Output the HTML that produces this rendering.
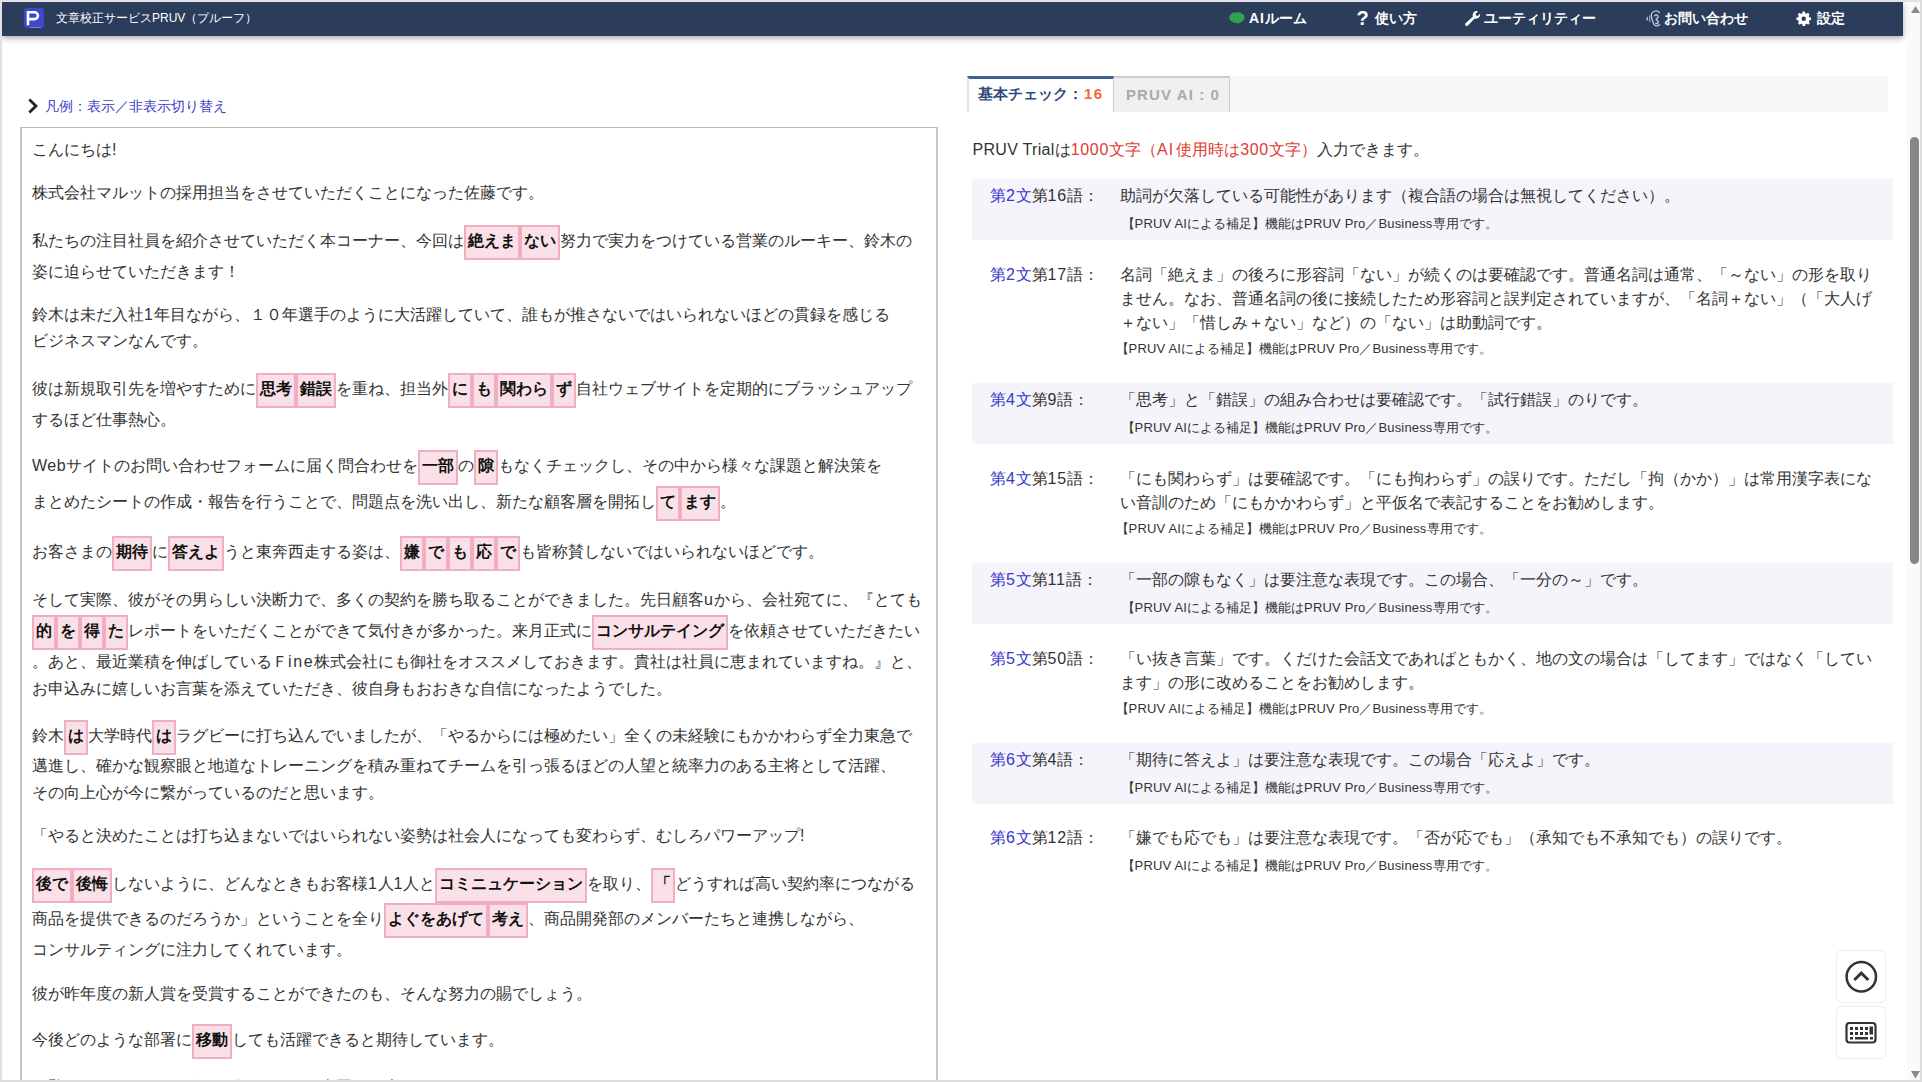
<!DOCTYPE html>
<html lang="ja">
<head>
<meta charset="utf-8">
<title>文章校正サービスPRUV（プルーフ）</title>
<style>
html,body{margin:0;padding:0;width:1922px;height:1082px;overflow:hidden;}
body{width:1922px;height:1082px;position:relative;overflow:hidden;background:#fff;font-family:"Liberation Sans",sans-serif;color:#333;}
*{box-sizing:border-box;}
#frame{position:absolute;left:0;top:0;width:1922px;height:1082px;border:2px solid #dcdcdc;border-top-color:#e2e2e6;border-left-color:#e1e1e5;z-index:50;pointer-events:none;}
#nav{position:absolute;left:2px;top:2px;width:1901px;height:34px;background:#2c3d5c;box-shadow:0 2px 6px rgba(20,30,50,.4);z-index:10;}
#logo{position:absolute;left:22px;top:6px;width:20px;height:20px;border-radius:3px;background:#3f48cc;}
#title{position:absolute;left:54px;top:0;height:32px;line-height:32px;font-size:12px;color:#fff;white-space:nowrap;}
.ni{position:absolute;top:0;height:32px;line-height:32px;font-size:14px;font-weight:bold;color:#fff;white-space:nowrap;}
.ic{position:absolute;}
#legend{position:absolute;left:45px;top:95.500px;height:20px;line-height:20px;font-size:14px;color:#3d3dcc;white-space:nowrap;}
#box{position:absolute;left:20px;top:127px;width:918px;height:955px;border:1px solid #b9b9b9;border-bottom:0;border-left:2px solid #c6c6c6;border-right:2px solid #c6c6c6;background:#fff;overflow:hidden;}
.l{position:absolute;left:10px;height:35px;line-height:35px;font-size:16px;white-space:nowrap;color:#333;}
.h{display:inline-block;vertical-align:top;position:relative;top:2px;height:35px;line-height:27px;padding:0 2px;border:2px solid #f1adc2;background:#fae1e7;font-weight:bold;color:#111;}
.r{display:inline-block;}.a-1{letter-spacing:.7px;}.a-u{letter-spacing:1.4px;}.a-ine{letter-spacing:1.6px;}.a-Web{letter-spacing:.5px;}.n{letter-spacing:.7px;}.sa{letter-spacing:.17px;}
#tabs{position:absolute;left:967px;top:76px;width:921px;height:36px;background:#f7f7f7;}
#t1{position:absolute;left:0;top:0;width:147px;height:36px;background:#fff;border-top:3px solid #42608f;border-left:2px solid #e4e4e4;border-right:1px solid #ccc;font-size:15px;font-weight:bold;color:#2f4a7a;line-height:30px;padding-left:9px;white-space:nowrap;}
#t1 b{color:#f0683c;letter-spacing:1.3px;margin-left:1px;}
#t2{position:absolute;left:147px;top:0;width:116px;height:36px;background:#f0f0f0;border-top:2px solid #ccc;border-right:1px solid #ccc;font-size:15px;font-weight:bold;color:#aaa;line-height:34px;padding-left:12px;letter-spacing:1.1px;white-space:nowrap;}
#trial{position:absolute;left:972.5px;top:138px;height:24px;line-height:24px;font-size:16px;color:#333;white-space:nowrap;}
#trial span{color:#e03a2e;}i{font-style:normal;}.t1{letter-spacing:.3px;}.t2{letter-spacing:1px;margin-right:2px;}
.it{position:absolute;left:972px;width:921px;}
.it.bg{background:#f4f4fa;}
.ref{position:absolute;left:18px;height:24px;line-height:24px;font-size:16px;color:#333;white-space:nowrap;}
.lk{color:#3838cc;}
.d{position:absolute;left:148px;height:24px;line-height:24px;font-size:16px;color:#333;white-space:nowrap;}
.s{position:absolute;left:149.600px;height:20px;line-height:20px;font-size:13px;color:#333;white-space:nowrap;}
.s.m{left:143.600px;}
.fb{position:absolute;left:1836px;width:50px;height:53px;border:1px solid #e8edf7;border-radius:5px;background:#fff;}
#sb{position:absolute;left:1907px;top:2px;width:13px;height:1078px;background:#fafafa;}
#thumb{position:absolute;left:3px;top:135px;width:9px;height:427px;border-radius:4.500px;background:#868686;}
</style>
</head>
<body>
<div id="nav">
  <div id="logo"><svg width="20" height="20" viewBox="0 0 20 20"><path d="M4 17.3V4.300h6.500a3.400 3.400 0 0 1 0 6.800H4" fill="none" stroke="#fff" stroke-width="2.600"/><path d="M6 19.500h11" stroke="#7a84e0" stroke-width="1" fill="none"/></svg></div>
  <div id="title">文章校正サービスPRUV（プルーフ）</div>
  <svg class="ic" style="left:1227px;top:10px" width="16" height="12" viewBox="0 0 16 12"><path d="M5.5 0.5C3.5 0.3 2 1.4 1.6 2.8 0.4 3.6 0 5 0.5 6.3 0.3 8 1.6 9.3 3.2 9.4 4 10.6 5.6 11 7 10.6 7.6 11.6 9.4 11.8 10.4 10.8 12.2 11 13.6 10 13.9 8.6 15.4 7.8 16 6 15.3 4.6 15.3 3 14 1.6 12.4 1.6 11.4 0.3 9.4 0 8 0.8 7.3 0.3 6.3 0.3 5.5 0.5Z" fill="#2fa34d"/></svg>
  <div class="ni" style="left:1247px"><i style="letter-spacing:.8px">AI</i>ルーム</div>
  <div class="ni" style="left:1354.5px;font-size:20px;top:-0.5px">?</div>
  <div class="ni" style="left:1373px">使い方</div>
  <svg class="ic" style="left:1463px;top:9.2px" width="16" height="15" viewBox="0 0 16 15"><path d="M15.2 2.6 12.8 5 11 4.6 10.6 2.8 13 0.4C11.6-.2 9.9.1 8.8 1.2 7.6 2.4 7.4 4.1 8 5.5L.6 12.3c-.7.7-.7 1.7 0 2.3s1.700.7 2.300 0L9.700 7.400c1.400.6 3.100.3 4.300-.8 1.100-1.100 1.400-2.700.9-4.100Z" fill="#fff"/></svg>
  <div class="ni" style="left:1482px">ユーティリティー</div>
  <svg class="ic" style="left:1642px;top:8px" width="18" height="17" viewBox="0 0 18 17"><g fill="none" stroke="#c6cde0" stroke-width="1.3" stroke-linecap="round" stroke-linejoin="round"><path d="M15.3 2.700C14.600 1.500 13.500 0.900 12.400 0.900 9.500 0.900 7.300 3 7.300 5.600c0 2.500 1 4 1.600 6 0.600 2.200 1.700 4.200 3.600 4.200 1.300 0 2.300-0.400 3.100-1.100"/><path d="M10.900 5.800C11.300 4.600 13.800 4.600 14.200 6.600c0.300 1.600-2 1.700-2.100 2.800 0 1.100 2.300 0.900 2.200 2.500-0.100 1.400-1.500 1.900-2.500 1.500"/></g><path d="M5.200 5.600h1v6.400h-1zM1.800 8.800L4 6.300v5z" fill="#aab3cf"/></svg>
  <div class="ni" style="left:1662px">お問い合わせ</div>
  <svg class="ic" style="left:1794px;top:8.5px" width="15.5" height="15.5" viewBox="0 0 16 16"><path fill="#fff" d="M15.500 9.200V6.800l-1.900-.4c-.1-.5-.3-.9-.6-1.300l1.100-1.600-1.700-1.700-1.600 1.100c-.4-.2-.9-.4-1.300-.6L9.200.5H6.800l-.4 1.900c-.5.100-.9.300-1.300.6L3.500 1.900 1.800 3.600l1.100 1.600c-.2.400-.4.900-.6 1.300L.5 6.800v2.400l1.900.4c.1.500.3.900.6 1.300l-1.100 1.600 1.700 1.700 1.600-1.100c.4.200.9.4 1.300.6l.4 1.900h2.400l.4-1.900c.5-.1.900-.3 1.300-.6l1.600 1.100 1.700-1.700-1.100-1.600c.2-.4.4-.9.6-1.300l1.700-.4ZM8 10.3A2.3 2.3 0 1 1 8 5.7a2.3 2.3 0 0 1 0 4.6Z"/></svg>
  <div class="ni" style="left:1815px">設定</div>
</div>

<svg class="ic" style="left:27px;top:98px" width="12" height="16" viewBox="0 0 12 16"><path d="M2.300 1.400l6.700 6.600-6.700 6.600" fill="none" stroke="#222" stroke-width="2.800"/></svg>
<div id="legend">凡例：表示／非表示切り替え</div>

<div id="box">
<div class="l" style="top:3.7px"><span class="r" style="width:84.45px">こんにちは!</span></div>
<div class="l" style="top:46.6px"><span class="r" style="width:512px">株式会社マルットの採用担当をさせていただくことになった佐藤です。</span></div>
<div class="l" style="top:95.0px"><span class="r" style="width:432px">私たちの注目社員を紹介させていただく本コーナー、今回は</span><span class="h" style="width:56px">絶えま</span><span class="h" style="width:40px">ない</span><span class="r" style="width:352px">努力で実力をつけている営業のルーキー、鈴木の</span></div>
<div class="l" style="top:126.2px"><span class="r" style="width:208px">姿に迫らせていただきます！</span></div>
<div class="l" style="top:168.6px"><span class="r" style="width:857.61px">鈴木は未だ入社<i class="a-1">1</i>年目ながら、１０年選手のように大活躍していて、誰もが推さないではいられないほどの貫録を感じる</span></div>
<div class="l" style="top:195.3px"><span class="r" style="width:176px">ビジネスマンなんです。</span></div>
<div class="l" style="top:242.7px"><span class="r" style="width:224px">彼は新規取引先を増やすために</span><span class="h" style="width:40px">思考</span><span class="h" style="width:40px">錯誤</span><span class="r" style="width:112px">を重ね、担当外</span><span class="h" style="width:24px">に</span><span class="h" style="width:24px">も</span><span class="h" style="width:56px">関わら</span><span class="h" style="width:24px">ず</span><span class="r" style="width:336px">自社ウェブサイトを定期的にブラッシュアップ</span></div>
<div class="l" style="top:274.0px"><span class="r" style="width:144px">するほど仕事熱心。</span></div>
<div class="l" style="top:319.9px"><span class="r" style="width:386.11px"><i class="a-Web">Web</i>サイトのお問い合わせフォームに届く問合わせを</span><span class="h" style="width:40px">一部</span><span class="r" style="width:16px">の</span><span class="h" style="width:24px">隙</span><span class="r" style="width:384px">もなくチェックし、その中から様々な課題と解決策を</span></div>
<div class="l" style="top:355.8px"><span class="r" style="width:624px">まとめたシートの作成・報告を行うことで、問題点を洗い出し、新たな顧客層を開拓し</span><span class="h" style="width:24px">て</span><span class="h" style="width:40px">ます</span><span class="r" style="width:16px">。</span></div>
<div class="l" style="top:406.3px"><span class="r" style="width:80px">お客さまの</span><span class="h" style="width:40px">期待</span><span class="r" style="width:16px">に</span><span class="h" style="width:56px">答えよ</span><span class="r" style="width:176px">うと東奔西走する姿は、</span><span class="h" style="width:24px">嫌</span><span class="h" style="width:24px">で</span><span class="h" style="width:24px">も</span><span class="h" style="width:24px">応</span><span class="h" style="width:24px">で</span><span class="r" style="width:304px">も皆称賛しないではいられないほどです。</span></div>
<div class="l" style="top:454.0px"><span class="r" style="width:890.31px">そして実際、彼がその男らしい決断力で、多くの契約を勝ち取ることができました。先日顧客<i class="a-u">u</i>から、会社宛てに、『とても</span></div>
<div class="l" style="top:485.0px"><span class="h" style="width:24px">的</span><span class="h" style="width:24px">を</span><span class="h" style="width:24px">得</span><span class="h" style="width:24px">た</span><span class="r" style="width:464px">レポートをいただくことができて気付きが多かった。来月正式に</span><span class="h" style="width:136px">コンサルテイング</span><span class="r" style="width:192px">を依頼させていただきたい</span></div>
<div class="l" style="top:516.3px"><span class="r" style="width:890.16px">。あと、最近業積を伸ばしているＦ<i class="a-ine">ine</i>株式会社にも御社をオススメしておきます。貴社は社員に恵まれていますね。』と、</span></div>
<div class="l" style="top:542.7px"><span class="r" style="width:640px">お申込みに嬉しいお言葉を添えていただき、彼自身もおおきな自信になったようでした。</span></div>
<div class="l" style="top:590.4px"><span class="r" style="width:32px">鈴木</span><span class="h" style="width:24px">は</span><span class="r" style="width:64px">大学時代</span><span class="h" style="width:24px">は</span><span class="r" style="width:736px">ラグビーに打ち込んでいましたが、「やるからには極めたい」全くの未経験にもかかわらず全力東急で</span></div>
<div class="l" style="top:620.0px"><span class="r" style="width:864px">邁進し、確かな観察眼と地道なトレーニングを積み重ねてチームを引っ張るほどの人望と統率力のある主将として活躍、</span></div>
<div class="l" style="top:647.2px"><span class="r" style="width:352px">その向上心が今に繋がっているのだと思います。</span></div>
<div class="l" style="top:690.4px"><span class="r" style="width:772.45px">「やると決めたことは打ち込まないではいられない姿勢は社会人になっても変わらず、むしろパワーアップ!</span></div>
<div class="l" style="top:737.8px"><span class="h" style="width:40px">後で</span><span class="h" style="width:40px">後悔</span><span class="r" style="width:323.22px">しないように、どんなときもお客様<i class="a-1">1</i>人<i class="a-1">1</i>人と</span><span class="h" style="width:152px">コミニュケーション</span><span class="r" style="width:64px">を取り、</span><span class="h" style="width:24px">「</span><span class="r" style="width:240px">どうすれば高い契約率につながる</span></div>
<div class="l" style="top:773.0px"><span class="r" style="width:352px">商品を提供できるのだろうか」ということを全り</span><span class="h" style="width:104px">よぐをあげて</span><span class="h" style="width:40px">考え</span><span class="r" style="width:336px">、商品開発部のメンバーたちと連携しながら、</span></div>
<div class="l" style="top:803.6px"><span class="r" style="width:320px">コンサルティングに注力してくれています。</span></div>
<div class="l" style="top:848.2px"><span class="r" style="width:560px">彼が昨年度の新人賞を受賞することができたのも、そんな努力の賜でしょう。</span></div>
<div class="l" style="top:893.5px"><span class="r" style="width:160px">今後どのような部署に</span><span class="h" style="width:40px">移動</span><span class="r" style="width:272px">しても活躍できると期待しています。</span></div>
<div class="l" style="top:940.6px"><span class="r" style="width:432px">ご覧いただきありがとうございました。次回もお楽しみに。</span></div>

</div>

<div id="tabs"><div id="t1">基本チェック：<b>16</b></div><div id="t2">PRUV AI : 0</div></div>
<div id="trial"><i class="t1">PRUV Trial</i>は<span><i class="n">1000</i>文字（<i class="t2">AI</i>使用時は<i class="n">300</i>文字）</span>入力できます。</div>
<div class="it bg" style="top:179px;height:61px"><div class="ref" style="top:5.1px"><span class="lk">第<span class="n">2</span>文</span>第<span class="n">16</span>語：</div><div class="d" style="top:5.1px">助詞が欠落している可能性があります（複合語の場合は無視してください）。</div><div class="s" style="top:34.9px">【<span class="sa">PRUV AI</span>による補足】機能は<span class="sa">PRUV Pro</span>／<span class="sa">Business</span>専用です。</div></div>
<div class="it" style="top:257px;height:109px"><div class="ref" style="top:5.5px"><span class="lk">第<span class="n">2</span>文</span>第<span class="n">17</span>語：</div><div class="d" style="top:5.5px">名詞「絶えま」の後ろに形容詞「ない」が続くのは要確認です。普通名詞は通常、「～ない」の形を取り</div><div class="d" style="top:29.7px">ません。なお、普通名詞の後に接続したため形容詞と誤判定されていますが、「名詞＋ない」（「大人げ</div><div class="d" style="top:53.9px">＋ない」「惜しみ＋ない」など）の「ない」は助動詞です。</div><div class="s m" style="top:81.8px">【<span class="sa">PRUV AI</span>による補足】機能は<span class="sa">PRUV Pro</span>／<span class="sa">Business</span>専用です。</div></div>
<div class="it bg" style="top:383px;height:61px"><div class="ref" style="top:5.1px"><span class="lk">第<span class="n">4</span>文</span>第<span class="n">9</span>語：</div><div class="d" style="top:5.1px">「思考」と「錯誤」の組み合わせは要確認です。「試行錯誤」のりです。</div><div class="s" style="top:34.9px">【<span class="sa">PRUV AI</span>による補足】機能は<span class="sa">PRUV Pro</span>／<span class="sa">Business</span>専用です。</div></div>
<div class="it" style="top:461px;height:85px"><div class="ref" style="top:5.5px"><span class="lk">第<span class="n">4</span>文</span>第<span class="n">15</span>語：</div><div class="d" style="top:5.5px">「にも関わらず」は要確認です。「にも拘わらず」の誤りです。ただし「拘（かか）」は常用漢字表にな</div><div class="d" style="top:29.7px">い音訓のため「にもかかわらず」と平仮名で表記することをお勧めします。</div><div class="s m" style="top:57.6px">【<span class="sa">PRUV AI</span>による補足】機能は<span class="sa">PRUV Pro</span>／<span class="sa">Business</span>専用です。</div></div>
<div class="it bg" style="top:563px;height:61px"><div class="ref" style="top:5.1px"><span class="lk">第<span class="n">5</span>文</span>第<span class="n">11</span>語：</div><div class="d" style="top:5.1px">「一部の隙もなく」は要注意な表現です。この場合、「一分の～」です。</div><div class="s" style="top:34.9px">【<span class="sa">PRUV AI</span>による補足】機能は<span class="sa">PRUV Pro</span>／<span class="sa">Business</span>専用です。</div></div>
<div class="it" style="top:641px;height:85px"><div class="ref" style="top:5.5px"><span class="lk">第<span class="n">5</span>文</span>第<span class="n">50</span>語：</div><div class="d" style="top:5.5px">「い抜き言葉」です。くだけた会話文であればともかく、地の文の場合は「してます」ではなく「してい</div><div class="d" style="top:29.7px">ます」の形に改めることをお勧めします。</div><div class="s m" style="top:57.6px">【<span class="sa">PRUV AI</span>による補足】機能は<span class="sa">PRUV Pro</span>／<span class="sa">Business</span>専用です。</div></div>
<div class="it bg" style="top:743px;height:61px"><div class="ref" style="top:5.1px"><span class="lk">第<span class="n">6</span>文</span>第<span class="n">4</span>語：</div><div class="d" style="top:5.1px">「期待に答えよ」は要注意な表現です。この場合「応えよ」です。</div><div class="s" style="top:34.9px">【<span class="sa">PRUV AI</span>による補足】機能は<span class="sa">PRUV Pro</span>／<span class="sa">Business</span>専用です。</div></div>
<div class="it" style="top:821px;height:61px"><div class="ref" style="top:5.1px"><span class="lk">第<span class="n">6</span>文</span>第<span class="n">12</span>語：</div><div class="d" style="top:5.1px">「嫌でも応でも」は要注意な表現です。「否が応でも」（承知でも不承知でも）の誤りです。</div><div class="s" style="top:34.9px">【<span class="sa">PRUV AI</span>による補足】機能は<span class="sa">PRUV Pro</span>／<span class="sa">Business</span>専用です。</div></div>


<div class="fb" style="top:950px"><svg width="48" height="51" viewBox="0 0 48 51"><circle cx="24.300" cy="25.800" r="14.700" fill="none" stroke="#333" stroke-width="2.500"/><path d="M17.300 29l7-7 7 7" fill="none" stroke="#333" stroke-width="3"/></svg></div>
<div class="fb" style="top:1006px"><svg width="48" height="51" viewBox="0 0 48 51"><rect x="9.500" y="16" width="29" height="19.500" rx="3" fill="none" stroke="#333" stroke-width="2.200"/><g fill="#333"><rect x="13" y="20" width="3" height="3"/><rect x="18" y="20" width="3" height="3"/><rect x="23" y="20" width="3" height="3"/><rect x="28" y="20" width="3" height="3"/><rect x="32.500" y="19.500" width="3.500" height="8"/><rect x="13" y="25" width="3" height="3"/><rect x="18" y="25" width="3" height="3"/><rect x="23" y="25" width="3" height="3"/><rect x="28" y="25" width="3" height="3"/><rect x="13" y="30" width="3" height="2.500"/><rect x="18" y="30" width="13" height="2.500"/><rect x="33" y="30" width="3" height="2.500"/></g></svg></div>

<div id="sb"><svg class="ic" style="left:3.600px;top:4px" width="9" height="7" viewBox="0 0 9 7"><path d="M0 7L4.500 0 9 7Z" fill="#8a8a8a"/></svg><div id="thumb"></div><svg class="ic" style="left:3.600px;top:1069px" width="9" height="7.500" viewBox="0 0 9 7.500"><path d="M0 0h9L4.500 7.500Z" fill="#8a8a8a"/></svg></div>
<div id="frame"></div>
</body>
</html>
